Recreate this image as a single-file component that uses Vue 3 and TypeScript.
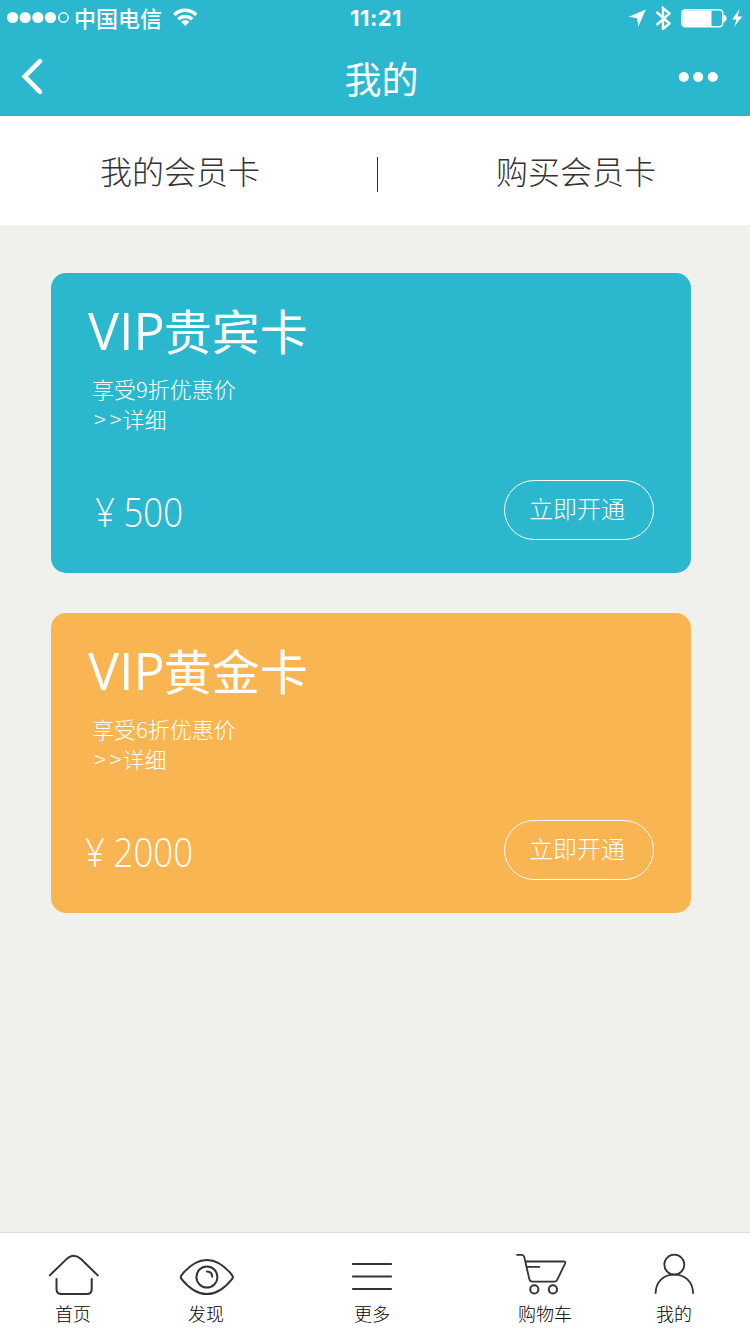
<script setup lang="ts">
interface Card {
  tone: string
  name: string
  offer: string
  price: string
}

interface Tab {
  id: string
  label: string
}

const cards: Card[] = [
  { tone: 'teal', name: '贵宾卡', offer: '9', price: '500' },
  { tone: 'gold', name: '黄金卡', offer: '6', price: '2000' },
]

const tabs: Tab[] = [
  { id: 'home', label: '首页' },
  { id: 'find', label: '发现' },
  { id: 'more', label: '更多' },
  { id: 'cart', label: '购物车' },
  { id: 'mine', label: '我的' },
]
</script>

<template>
  <div class="page">
    <header class="top">
      <div class="status">
        <div class="carrier">
          <svg class="signal" width="64" height="14" viewBox="0 0 64 14">
            <g fill="#fff">
              <circle cx="6.6" cy="6.5" r="5.6" />
              <circle cx="19.2" cy="6.5" r="5.6" />
              <circle cx="31.9" cy="6.5" r="5.6" />
              <circle cx="44.5" cy="6.5" r="5.6" />
            </g>
            <circle cx="57.5" cy="6.5" r="4.7" fill="none" stroke="#fff" stroke-width="1.5" />
          </svg>
          <span class="operator">中国电信</span>
          <svg class="wifi" width="26" height="20" viewBox="0 0 26 20">
            <g fill="none" stroke="#fff" stroke-width="3.5">
              <path d="M2.3 7.9C8.4 1.8 17.4 1.8 24.2 7.9" />
              <path d="M6.3 12.3C10.4 8.4 16.2 8.4 20.3 12.3" />
            </g>
            <path d="M9.1 14.7Q13.3 11.5 17.5 14.7L13.3 19.1Z" fill="#fff" />
          </svg>
        </div>
        <div class="clock">11:21</div>
        <svg class="indicators" width="118" height="30" viewBox="0 0 118 30">
          <path d="M0.8 16.8L17.8 9.6L10.4 26.6L9 18.2Z" fill="#fff" />
          <path d="M28.5 12L41.5 23.5L35 29V8L41.5 13.5L28.5 25" fill="none" stroke="#fff" stroke-width="2.4" />
          <rect x="53.8" y="9.8" width="41" height="17" rx="3.5" fill="none" stroke="#fff" stroke-width="1.5" />
          <path d="M56 10.5H83.5V26.2H56Q54.5 26 54.5 24V13Q54.5 10.5 56 10.5Z" fill="#fff" />
          <path d="M95.5 14.8Q98.6 15.3 98.6 18.3T95.5 22Z" fill="#fff" />
          <path d="M111.6 9L104 19.4H108.5L106 27L114.4 16.4H109.6Z" fill="#fff" />
        </svg>
      </div>
      <div class="nav">
        <svg class="back" width="26" height="40" viewBox="0 0 26 40">
          <path d="M20 5.2L4.7 20.5L20 35.8" fill="none" stroke="#fff" stroke-width="4.6" stroke-linecap="round" />
        </svg>
        <h1>我的</h1>
        <svg class="dots" width="42" height="12" viewBox="0 0 42 12">
          <g fill="#fff">
            <circle cx="6.8" cy="6" r="5" />
            <circle cx="21.2" cy="6" r="5" />
            <circle cx="35.8" cy="6" r="5" />
          </g>
        </svg>
      </div>
    </header>

    <div class="switch">
      <span class="choice first">我的会员卡</span>
      <i class="bar"></i>
      <span class="choice second">购买会员卡</span>
    </div>

    <main class="cards">
      <section v-for="c in cards" :key="c.tone" class="card" :class="c.tone">
        <h2><span class="vip">VIP</span>{{ c.name }}</h2>
        <p class="offer">享受{{ c.offer }}折优惠价</p>
        <p class="detail"><span class="arrows">&gt;&gt;</span>详细</p>
        <div class="buy">
          <span class="price"><span class="yen">¥</span>{{ c.price }}</span>
          <button type="button">立即开通</button>
        </div>
      </section>
    </main>

    <nav class="tabs">
      <div v-for="t in tabs" :key="t.id" class="tab" :class="t.id">
        <svg width="60" height="48" viewBox="0 0 60 48" fill="none" stroke="#333" stroke-width="2" stroke-linecap="round" stroke-linejoin="round">
          <template v-if="t.id === 'home'">
            <path d="M6.8 27.4L23.5 11.1Q30.7 4.3 38 11.1L54.8 27.4" />
            <path d="M13.5 31V41Q13.5 46.1 18.5 46.1H43.7Q48.7 46.1 48.7 41V31" />
          </template>
          <template v-else-if="t.id === 'find'">
            <path d="M5.4 27.3Q17.5 11.9 30.9 11.9T56.2 27.3Q57.6 29 56.2 30.8Q44 46.1 30.9 46.1T5.4 30.8Q4 29 5.4 27.3Z" />
            <circle cx="30.9" cy="29" r="10.5" />
            <path d="M30.9 23.6Q36 23.7 36.2 28.8" />
          </template>
          <template v-else-if="t.id === 'more'">
            <path d="M10.9 15.9H49.1M10.9 28.6H49.1M10.9 40.9H49.1" />
          </template>
          <template v-else-if="t.id === 'cart'">
            <path d="M2 6.8H6.6Q8.6 6.8 9.2 8.8L14.3 31Q15 33.6 17.5 33.6H39.5Q41.3 33.6 42.3 31.6L50.2 15.3Q50.7 13.5 48.7 13.5H10.5M12 18.9H24.3" stroke-width="1.8" />
            <circle cx="19.3" cy="41.4" r="4.1" />
            <circle cx="37.9" cy="41.4" r="4.1" />
          </template>
          <template v-else>
            <circle cx="30.3" cy="16.6" r="10" stroke-width="1.8" />
            <path d="M11.6 45C12 33 20 26.7 30.3 26.7S48.7 33 49.1 45" stroke-width="1.8" />
          </template>
        </svg>
        <span>{{ t.label }}</span>
      </div>
    </nav>
  </div>
</template>

<style>
html,
body {
  margin: 0;
}
</style>

<style scoped>
.page {
  width: 750px;
  height: 1334px;
  display: flex;
  flex-direction: column;
  background: #f0f0ec;
  font-family: "Noto Sans CJK SC", sans-serif;
  font-weight: 300;
  overflow: hidden;
}
svg {
  display: block;
  flex: none;
}
h1,
h2,
p {
  margin: 0;
}
.top {
  height: 116px;
  background: #2bb7ce;
  color: #fff;
}
.status {
  height: 36px;
  display: grid;
  grid-template-columns: 1fr auto 1fr;
}
.carrier {
  height: 36px;
  display: flex;
  align-items: center;
  padding-left: 6px;
}
.operator {
  margin-left: 4px;
  font-size: 22px;
  font-weight: 500;
  line-height: 34px;
  padding-bottom: 2px;
}
.wifi {
  margin: -3px 0 0 10px;
}
.clock {
  padding-left: 2px;
  font: 700 22px/37px Inter, sans-serif;
  letter-spacing: 0.5px;
}
.indicators {
  justify-self: end;
  margin-right: 4px;
}
.nav {
  height: 80px;
  display: grid;
  grid-template-columns: 1fr auto 1fr;
  align-items: center;
}
.back {
  margin-left: 20px;
}
.nav h1 {
  padding: 4px 0 0 13px;
  font-size: 37px;
  font-weight: 400;
  line-height: 76px;
}
.dots {
  justify-self: end;
  margin: 1px 31px 0 0;
}
.switch {
  height: 109px;
  display: flex;
  align-items: center;
  background: #fff;
  color: #333;
}
.choice {
  padding-bottom: 2px;
  font-size: 32px;
  line-height: 48px;
}
.first {
  margin-left: 100px;
}
.bar {
  width: 1px;
  height: 35px;
  margin: 7px 118px 0 117px;
  background: #333;
}
.cards {
  flex: 1;
  padding: 48px 59px 0 51px;
}
.card {
  box-sizing: border-box;
  height: 300px;
  margin-bottom: 40px;
  padding: 24px 37px 33px;
  border-radius: 15px;
  color: #fff;
  display: flex;
  flex-direction: column;
}
.teal {
  background: #2bb7ce;
}
.gold {
  background: #f9b552;
}
h2 {
  font-size: 48px;
  font-weight: 400;
  line-height: 64px;
  white-space: nowrap;
}
.vip {
  margin-right: -1px;
  font-family: "Open Sans", sans-serif;
  font-size: 52px;
  line-height: 1;
}
.offer,
.detail {
  padding-left: 4px;
  font-size: 22px;
  line-height: 30px;
}
.offer {
  margin-top: 12px;
}
.arrows {
  margin: 0 -3px 0 2px;
  letter-spacing: 4px;
}
.buy {
  height: 60px;
  margin-top: auto;
  display: flex;
  align-items: center;
  justify-content: space-between;
}
.price {
  width: 130px;
  margin-left: -14px;
  padding-top: 4px;
  text-align: center;
  font-family: "Open Sans", sans-serif;
  font-size: 40px;
  font-weight: 300;
  line-height: 56px;
  transform: scaleX(0.87);
}
.yen {
  margin-right: 10px;
}
button {
  box-sizing: border-box;
  width: 150px;
  height: 60px;
  padding: 0 4px 5px 0;
  border: 1px solid #fff;
  border-radius: 30px;
  background: none;
  color: inherit;
  font: inherit;
  font-size: 24px;
}
.tabs {
  box-sizing: border-box;
  height: 102px;
  display: flex;
  border-top: 1px solid #dedede;
  background: #fff;
  color: #000;
}
.tab {
  width: 60px;
  padding-top: 15px;
  display: flex;
  flex-direction: column;
  align-items: center;
  font-size: 18px;
  line-height: 35px;
}
.home {
  margin-left: 43px;
}
.find {
  margin-left: 73px;
}
.more {
  margin-left: 106px;
}
.cart {
  margin-left: 113px;
}
.mine {
  margin-left: 69px;
}
</style>
